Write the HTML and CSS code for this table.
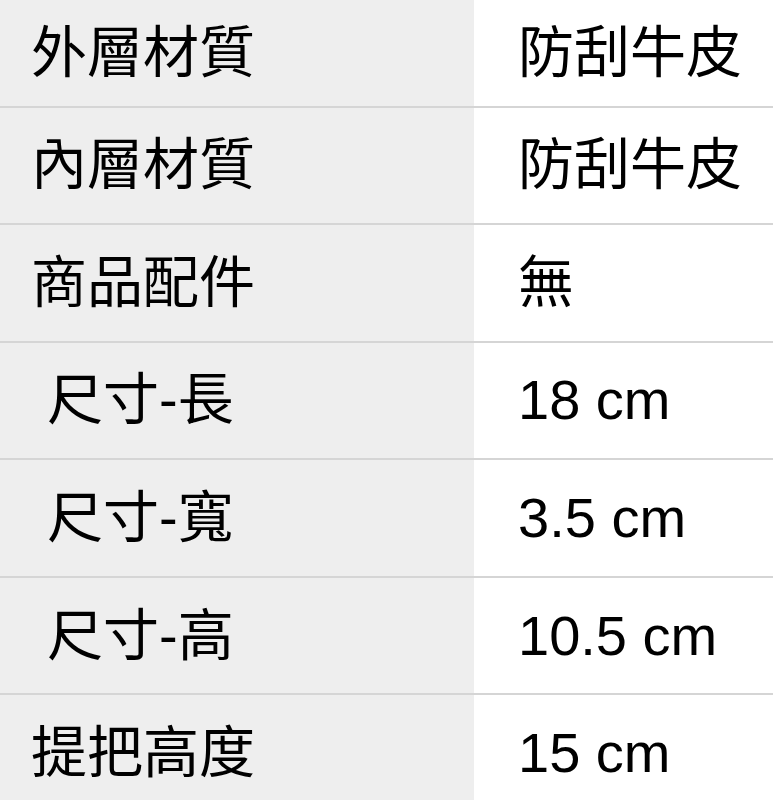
FILE: index.html
```html
<!DOCTYPE html>
<html lang="zh-Hant">
<head>
<meta charset="utf-8">
<link rel="stylesheet" href="styles.css">
</head>
<body>
<div class="spec">
  <div class="row first"><div class="key">外層材質</div><div class="val">防刮牛皮</div></div>
  <div class="row"><div class="key">內層材質</div><div class="val">防刮牛皮</div></div>
  <div class="row"><div class="key">商品配件</div><div class="val">無</div></div>
  <div class="row"><div class="key indent">尺寸-長</div><div class="val">18 cm</div></div>
  <div class="row"><div class="key indent">尺寸-寬</div><div class="val">3.5 cm</div></div>
  <div class="row"><div class="key indent">尺寸-高</div><div class="val">10.5 cm</div></div>
  <div class="row"><div class="key">提把高度</div><div class="val">15 cm</div></div>
</div>
</body>
</html>
```
FILE: styles.css
```css
html, body {
  margin: 0;
  padding: 0;
  background: #ffffff;
}
body {
  font-family: "Liberation Sans", "Noto Sans CJK TC", sans-serif;
  color: #000000;
  overflow: hidden;
}
.spec {
  display: flex;
  flex-direction: column;
}
.row {
  display: grid;
  grid-template-columns: 474px 1fr;
  height: 117.6px;
  border-bottom: 2px solid #d5d5d5;
  box-sizing: border-box;
}
.row.first {
  height: 107.5px;
}
.key, .val {
  display: flex;
  align-items: center;
  font-size: 56px;
  line-height: 1;
}
.key {
  background: #eeeeee;
  padding-left: 31px;
}
.key.indent {
  padding-left: 47px;
}
.val {
  background: #ffffff;
  padding-left: 44px;
}
```
